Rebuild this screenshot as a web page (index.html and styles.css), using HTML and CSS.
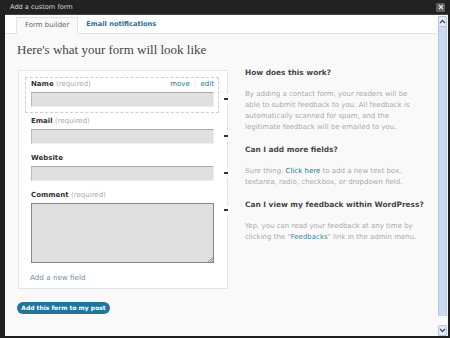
FILE: index.html
```html
<!DOCTYPE html>
<html>
<head>
<meta charset="utf-8">
<link rel="stylesheet" href="styles.css">
</head>
<body>
<div class="window">
  <div class="titlebar">
    <span class="title">Add a custom form</span>
    <span class="close"><svg width="8" height="8" viewBox="0 0 8 8"><path d="M2 2 L6 6 M6 2 L2 6" stroke="#e8e8e8" stroke-width="1.2"/></svg></span>
  </div>
  <div class="main">
    <div class="content">
      <div class="tabs">
        <span class="tab active">Form builder</span>
        <span class="tab link">Email notifications</span>
      </div>
      <div class="body">
        <h1 class="heading">Here's what your form will look like</h1>
        <div class="row">
          <div class="card">
            <div class="field hover">
              <div class="label-row"><span class="label">Name <span class="req">(required)</span></span><span class="actions">move <span class="sep">|</span> edit</span></div>
              <div class="input"></div>
              <span class="handle"></span>
            </div>
            <div class="field">
              <div class="label-row"><span class="label">Email <span class="req">(required)</span></span></div>
              <div class="input"></div>
              <span class="handle"></span>
            </div>
            <div class="field">
              <div class="label-row"><span class="label">Website</span></div>
              <div class="input"></div>
              <span class="handle"></span>
            </div>
            <div class="field">
              <div class="label-row"><span class="label">Comment <span class="req">(required)</span></span></div>
              <div class="textarea"><svg class="grip" width="6" height="6" viewBox="0 0 6 6"><path d="M1 6 L6 1 M3 6 L6 3 M5 6 L6 5" stroke="#888" stroke-width="0.8"/></svg></div>
              <span class="handle"></span>
            </div>
            <div class="add-field">Add a new field</div>
          </div>
          <div class="help">
            <h2 class="q">How does this work?</h2>
            <p class="a">By adding a contact form, your readers will be<br>able to submit feedback to you. All feedback is<br>automatically scanned for spam, and the<br>legitimate feedback will be emailed to you.</p>
            <h2 class="q">Can I add more fields?</h2>
            <p class="a">Sure thing. <span class="blue">Click here</span> to add a new text box,<br>textarea, radio, checkbox, or dropdown field.</p>
            <h2 class="q">Can I view my feedback within WordPress?</h2>
            <p class="a">Yep, you can read your feedback at any time by<br>clicking the "<span class="teal">Feedbacks</span>" link in the admin menu.</p>
          </div>
        </div>
        <div class="button">Add this form to my post</div>
      </div>
    </div>
    <div class="scrollbar">
      <div class="sb-btn"><svg width="7" height="5" viewBox="0 0 7 5"><path d="M1 4 L3.5 1.5 L6 4" stroke="#4a4a6a" stroke-width="1.3" fill="none"/></svg></div>
      <div class="sb-track"><div class="sb-thumb"></div></div>
      <div class="sb-btn"><svg width="7" height="5" viewBox="0 0 7 5"><path d="M1 1 L3.5 3.5 L6 1" stroke="#4a4a6a" stroke-width="1.3" fill="none"/></svg></div>
    </div>
  </div>
</div>
</body>
</html>
```

FILE: styles.css
```css
* { box-sizing: border-box; }
html, body { margin: 0; padding: 0; }
body {
  background: #1e1e1e;
  font-family: "DejaVu Sans", Verdana, sans-serif;
  width: 450px;
  height: 338px;
  overflow: hidden;
}
.window {
  display: flex;
  flex-direction: column;
  height: 338px;
  padding: 0 2px 2px 5px;
}
.titlebar {
  height: 14px;
  display: flex;
  align-items: center;
  justify-content: space-between;
  padding: 0 5px 0 10px;
  color: #d8d8d8;
  font-size: 6.6px;
  background: #222;
  margin-left: -5px;
  margin-right: -2px;
}
.close {
  width: 9px;
  height: 9px;
  background: #5c5c5c;
  border-radius: 1px;
  display: flex;
  align-items: center;
  justify-content: center;
}
.main {
  flex: 1;
  display: flex;
  min-height: 0;
  border-top: 1px solid #444;
}
.content {
  flex: 1;
  background: #f9f9f9;
  display: flex;
  flex-direction: column;
}
.tabs {
  height: 19px;
  background: #fff;
  border-bottom: 1px solid #e3e3e3;
  display: flex;
  align-items: flex-end;
  padding-left: 11px;
}
.tab {
  font-size: 7px;
  height: 17px;
  line-height: 15px;
  padding: 0 8px;
  margin-bottom: -1px;
}
.tab.active {
  color: #666;
  background: #f9f9f9;
  border: 1px solid #e3e3e3;
  border-bottom: 1px solid #f9f9f9;
}
.tab.link {
  color: #21759b;
  font-weight: bold;
  font-size: 6.7px;
}
.body {
  padding: 8px 0 0 12px;
}
.heading {
  margin: 0 0 10px 0;
  font-family: "Liberation Serif", "Times New Roman", serif;
  font-weight: normal;
  font-size: 13px;
  line-height: 16px;
  color: #464646;
}
.row {
  display: flex;
  align-items: flex-start;
}
.card {
  margin-top: 2px;
  margin-left: 1px;
  width: 210px;
  background: #fff;
  border: 1px solid #e6e6e6;
  padding: 6px 8px 0 6px;
  height: 219px;
  flex-shrink: 0;
}
.field {
  position: relative;
  border: 1px solid transparent;
  padding: 1px 4px 5px 5px;
  margin-bottom: 1px;
}
.field.hover {
  border: 1px dashed #cfcfcf;
}
.label-row {
  display: flex;
  justify-content: space-between;
  height: 10px;
  line-height: 10px;
  font-size: 7px;
  margin-bottom: 3px;
}
.label { font-weight: bold; color: #333; }
.req { font-weight: normal; color: #aaa; }
.actions { color: #21759b; }
.sep { color: #ddd; padding: 0 2px; }
.input {
  height: 15px;
  background: #e0e0e0;
  border-top: 1px solid #aaa;
  border-left: 1px solid #bbb;
  border-right: 1px solid #eee;
  border-bottom: 1px solid #eee;
}
.textarea {
  position: relative;
  height: 60px;
  background: #e0e0e0;
  border: 1px solid #888;
}
.grip { position: absolute; right: 0; bottom: 0; }
.handle {
  position: absolute;
  right: -13px;
  top: 16px;
  width: 10px;
  height: 10px;
  border-radius: 50%;
  background: #fff;
}
.handle::after {
  content: "";
  position: absolute;
  left: 3px;
  top: 4px;
  width: 4px;
  height: 1.5px;
  background: #333;
}
.add-field {
  font-size: 7.2px;
  line-height: 10px;
  color: #6f90a8;
  padding: 3px 0 0 5px;
}
.help {
  padding-left: 17px;
  flex: 1;
  white-space: nowrap;
}
.q {
  margin: 0 0 11px 0;
  font-size: 7.4px;
  line-height: 10px;
  font-weight: bold;
  color: #464646;
}
.a {
  margin: 0 0 12px 0;
  font-size: 7px;
  line-height: 11px;
  color: #aaa;
}
.blue { color: #21759b; }
.teal { color: #3c8a9c; }
.button {
  margin-top: 13px;
  width: 93px;
  height: 12px;
  border-radius: 6px;
  background: #21759b;
  color: #fff;
  font-size: 6px;
  font-weight: bold;
  line-height: 12px;
  text-align: center;
}
.scrollbar {
  width: 11px;
  background: #f9f9f9;
  display: flex;
  flex-direction: column;
  padding: 1px 1px 0 1px;
}
.sb-btn {
  height: 11px;
  background: #e6ecf6;
  border: 1px solid #b8c6dc;
  border-radius: 1px;
  display: flex;
  align-items: center;
  justify-content: center;
}
.sb-track {
  flex: 1;
  background: #fff;
  padding: 0 0 9px 0;
}
.sb-thumb {
  height: 100%;
  background: #c9dcf4;
  border-left: 1px dotted #9fb6d8;
  border-right: 1px dotted #9fb6d8;
}
```
